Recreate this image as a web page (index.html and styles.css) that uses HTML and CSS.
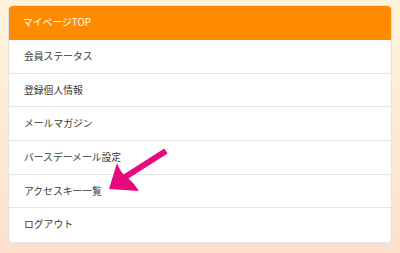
FILE: index.html
```html
<!DOCTYPE html>
<html lang="ja">
<head>
  <meta charset="UTF-8" />
  <title>マイページ</title>
  <link rel="stylesheet" href="styles.css">
</head>
<body>
  <div class="menu">
    <div class="menu-head">マイページTOP</div>
    <ul class="menu-list">
      <li>会員ステータス</li>
      <li>登録個人情報</li>
      <li>メールマガジン</li>
      <li>バースデーメール設定</li>
      <li>アクセスキー一覧</li>
      <li>ログアウト</li>
    </ul>
  </div>

  <!-- pointer arrow -->
  <svg class="arrow" width="70" height="50" viewBox="0 0 70 50">
    <path d="M64 6 L20 34" stroke="#e6097f" stroke-width="6" stroke-linecap="butt" fill="none"/>
    <path d="M7 44 L15 18 Q19 29 26 33 Q32 38 37 46 Z" fill="#e6097f"/>
  </svg>
</body>
</html>
```

FILE: styles.css
```css
* {
  margin: 0;
  padding: 0;
  box-sizing: border-box;
}

body {
  width: 400px;
  height: 253px;
  padding: 5px 8px 0;
  background: linear-gradient(to bottom, #fef4dc, #fde0cb);
  font-family: 'Noto Sans CJK JP', 'Noto Sans', sans-serif;
  position: relative;
  overflow: hidden;
}

.menu {
  background: #fff;
  border-radius: 5px;
  border: 1px solid #e3e3e3;
  overflow: hidden;
}

.menu-head {
  background: #ff8a00;
  color: #fff;
  font-size: 9.8px;
  height: 35px;
  line-height: 35px;
  padding-left: 15px;
  margin: -1px -1px 0;
  border-radius: 5px 5px 0 0;
}

.menu-list {
  list-style: none;
}

.menu-list li {
  height: 33.7px;
  line-height: 33px;
  padding-left: 15px;
  font-size: 9.8px;
  color: #3a3a3a;
  border-bottom: 1.6px solid #e5e5e5;
}

.menu-list li:last-child {
  border-bottom: none;
}

.arrow {
  position: absolute;
  left: 102px;
  top: 145px;
}
```
